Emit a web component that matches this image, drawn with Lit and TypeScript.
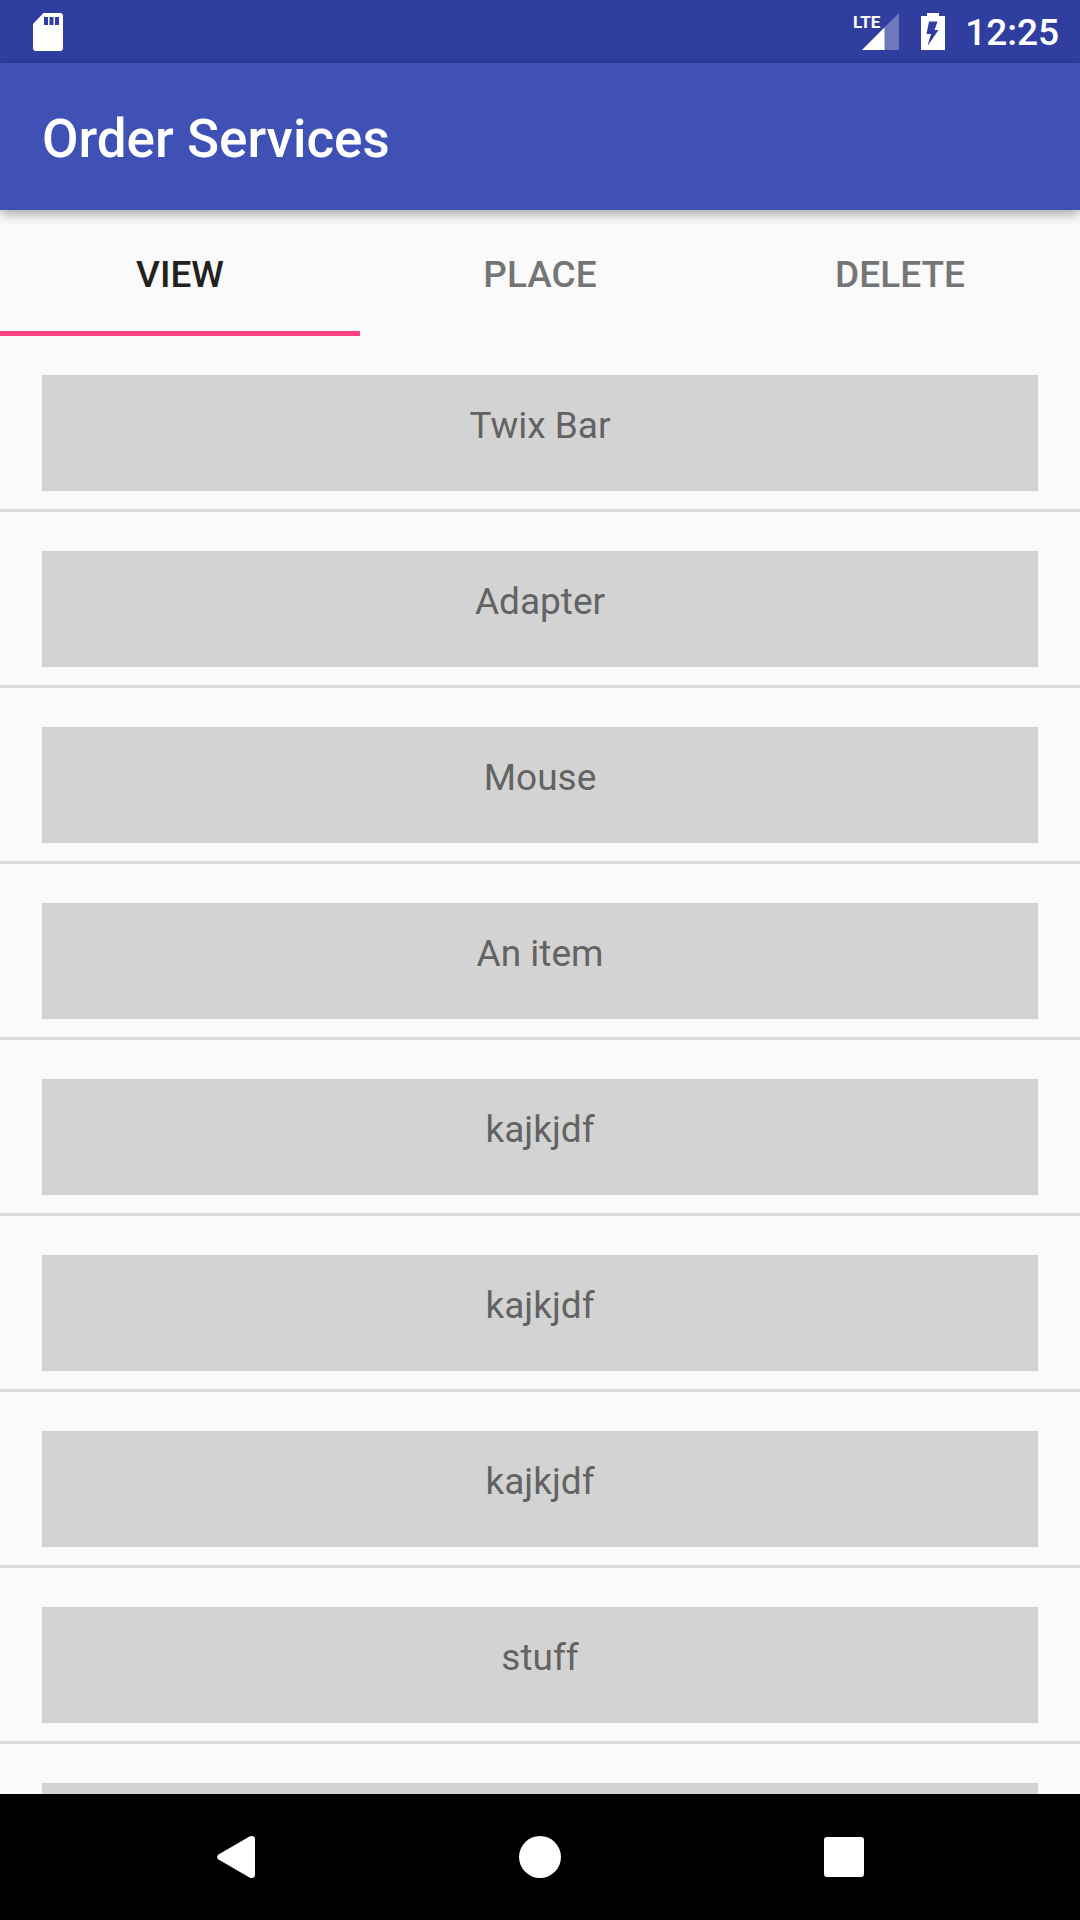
import { LitElement, html, css, svg } from "lit";
import { customElement, property, state } from "lit/decorators.js";

const ITEMS = [
  "Twix Bar",
  "Adapter",
  "Mouse",
  "An item",
  "kajkjdf",
  "kajkjdf",
  "kajkjdf",
  "stuff",
  "",
];

const TABS = ["View", "Place", "Delete"];

@customElement("status-bar")
class StatusBar extends LitElement {
  static styles = css`
    :host {
      display: flex;
      align-items: center;
      height: 63px;
      padding: 0 21px 0 32px;
      background: #303f9f;
      color: #fff;
    }
    .spacer {
      flex: 1;
    }
    .card {
      width: 32px;
      height: 40px;
    }
    .signal {
      width: 48px;
      height: 40px;
      margin-right: 19px;
    }
    .battery {
      width: 26px;
      height: 40px;
      margin-right: 19px;
    }
    .lte {
      fill: #fff;
      font: 700 17px "Liberation Sans Narrow", Roboto, sans-serif;
    }
    .clock {
      padding-top: 3px;
      font-size: 37px;
      font-weight: 500;
      line-height: 44px;
    }
  `;

  render() {
    return html`
      <svg class="card" viewBox="0 0 32 40" aria-hidden="true">
        <path fill="#fff" fill-rule="evenodd" d="M11.500 1H28a3 3 0 0 1 3 3V36a3 3 0 0 1-3 3H4a3 3 0 0 1-3-3V12ZM12 5v8h4V5Zm5.500 0v8h4V5Zm5.500 0v8h4V5Z" />
      </svg>
      <div class="spacer"></div>
      <svg class="signal" viewBox="0 0 48 40" role="img" aria-label="LTE signal">
        <path fill="#fff" fill-opacity=".3" d="M46 1V38H9Z" />
        <path fill="#fff" d="M31.500 15.500V38H9Z" />
        <text class="lte" x="0" y="16">LTE</text>
      </svg>
      <svg class="battery" viewBox="0 0 26 40" role="img" aria-label="Battery charging">
        <path fill="#fff" fill-rule="evenodd" d="M7 1H19V4H25V38H1V4H7ZM9 9.500L6.500 22H11L7.500 34L18.500 18H14.500L17.500 9.500Z" />
      </svg>
      <span class="clock">12:25</span>
    `;
  }
}

@customElement("nav-bar")
class NavBar extends LitElement {
  static styles = css`
    :host {
      display: flex;
      justify-content: center;
      gap: 94px;
      height: 126px;
      background: #000;
    }
    .key {
      display: flex;
      align-items: center;
      justify-content: center;
      width: 210px;
      padding: 0;
      border: 0;
      background: none;
    }
    .glyph {
      width: 60px;
      height: 60px;
      fill: #fff;
    }
  `;

  render() {
    const keys = [
      ["Back", svg`<path d="M12.500 27.500 43.500 9.500Q45 8.800 46.500 9Q49 9.500 49 12V48Q49 50.500 46.500 51Q45 51.200 43.500 50.500L12.500 32.500Q9.500 30 12.500 27.500Z" />`],
      ["Home", svg`<circle cx="30" cy="30" r="21" />`],
      ["Recent apps", svg`<rect x="10" y="10" width="40" height="40" rx="3" />`],
    ];
    return keys.map(
      ([label, shape]) => html`
        <button class="key" aria-label=${label}>
          <svg class="glyph" viewBox="0 0 60 60" aria-hidden="true">${shape}</svg>
        </button>
      `,
    );
  }
}

@customElement("order-list")
class OrderList extends LitElement {
  static styles = css`
    :host {
      display: block;
    }
    .list {
      margin: 0;
      padding: 0;
      list-style: none;
    }
    .row {
      padding: 39px 42px 18px;
      border-bottom: 3px solid #dcdcdc;
    }
    .item {
      box-sizing: border-box;
      min-height: 116px;
      padding-top: 29px;
      background: #d3d3d3;
      color: #636363;
      font-size: 37px;
      line-height: 44px;
      text-align: center;
    }
  `;

  @property({ attribute: false }) items: string[] = [];

  render() {
    return html`
      <ul class="list">
        ${this.items.map((name) => html`<li class="row"><div class="item">${name}</div></li>`)}
      </ul>
    `;
  }
}

@customElement("app-root")
class AppRoot extends LitElement {
  static styles = css`
    :host {
      display: flex;
      flex-direction: column;
      height: 100vh;
      overflow: hidden;
      background: #fafafa;
      font-family: Roboto, sans-serif;
    }
    .bar {
      display: flex;
      align-items: center;
      height: 147px;
      padding: 0 42px;
      background: #3f51b5;
      box-shadow: 0 4px 11px rgba(0, 0, 0, 0.34);
      color: #fff;
      z-index: 1;
    }
    .title {
      margin: 0;
      padding-top: 5px;
      font-size: 53px;
      font-weight: 500;
      line-height: 62px;
    }
    .tabs {
      display: grid;
      grid-template-columns: repeat(3, 1fr);
    }
    .tab {
      height: 126px;
      padding: 8px 0 0;
      border: 0;
      border-bottom: 5px solid transparent;
      background: none;
      color: #757575;
      font: 500 37px/44px Roboto, sans-serif;
      text-transform: uppercase;
    }
    .tab[aria-selected="true"] {
      border-bottom-color: #ff4081;
      color: #212121;
    }
    .content {
      flex: 1;
      min-height: 0;
      overflow: hidden;
    }
    status-bar,
    nav-bar,
    .bar,
    .tabs {
      flex: none;
    }
  `;

  @state() private selected = 0;

  render() {
    return html`
      <status-bar></status-bar>
      <header class="bar"><h1 class="title">Order Services</h1></header>
      <div class="tabs" role="tablist">
        ${TABS.map(
          (name, i) => html`
            <button
              class="tab"
              role="tab"
              aria-selected=${i === this.selected ? "true" : "false"}
              @click=${() => (this.selected = i)}
            >${name}</button>
          `,
        )}
      </div>
      <main class="content"><order-list .items=${ITEMS}></order-list></main>
      <nav-bar></nav-bar>
    `;
  }
}
